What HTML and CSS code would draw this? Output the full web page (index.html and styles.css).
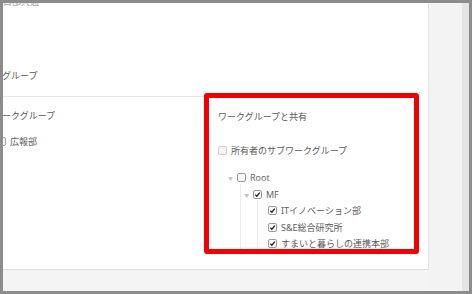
FILE: index.html
```html
<!DOCTYPE html>
<html>
  <head>
    <meta charset="utf-8" />
    <title>ワークグループと共有</title>
    <link rel="stylesheet" href="styles.css">
  </head>
  <body>
    <div class="window">
      <div class="main">
        <div class="left-col">
          <p class="label top-label">目部共通</p>
          <p class="label cut-group">所有者グループ</p>
          <hr class="divider" />
          <p class="label cut-work">ワークグループ</p>
          <p class="label dept">
            <span class="cb"></span>
            <span>広報部</span>
          </p>
        </div>

        <div class="share-box">
          <h3 class="share-title">ワークグループと共有</h3>
          <p class="row sub-row">
            <span class="cb disabled"></span>
            <span>所有者のサブワークグループ</span>
          </p>

          <ul class="tree">
            <li class="row level-0">
              <span class="arrow">&#9660;</span>
              <span class="cb"></span>
              <span class="latin">Root</span>
            </li>
            <li class="row level-1">
              <span class="arrow">&#9660;</span>
              <span class="cb on"><svg viewBox="0 0 8 8"><path d="M1.5 4.2 L3.3 6 L6.6 1.8" /></svg></span>
              <span class="latin">MF</span>
            </li>
            <li class="row level-2">
              <span class="cb on"><svg viewBox="0 0 8 8"><path d="M1.5 4.2 L3.3 6 L6.6 1.8" /></svg></span>
              <span>ITイノベーション部</span>
            </li>
            <li class="row level-2">
              <span class="cb on"><svg viewBox="0 0 8 8"><path d="M1.5 4.2 L3.3 6 L6.6 1.8" /></svg></span>
              <span>S&amp;E総合研究所</span>
            </li>
            <li class="row level-2">
              <span class="cb on"><svg viewBox="0 0 8 8"><path d="M1.5 4.2 L3.3 6 L6.6 1.8" /></svg></span>
              <span>すまいと暮らしの連携本部</span>
            </li>
            <li class="row level-2">
              <span class="cb on"><svg viewBox="0 0 8 8"><path d="M1.5 4.2 L3.3 6 L6.6 1.8" /></svg></span>
              <span>住宅事業本部</span>
            </li>
          </ul>
        </div>
      </div>
      <div class="side-strip"></div>
      <div class="side-edge"></div>
      <div class="footer"></div>
    </div>
  </body>
</html>
```

FILE: styles.css
```css
* {
  margin: 0;
  padding: 0;
  box-sizing: border-box;
}

body {
  font-family: "Noto Sans", "Noto Sans CJK JP", sans-serif;
  font-size: 9px;
  color: #5a5a5a;
  background-color: #fff;
}

.window {
  width: 472px;
  height: 294px;
  border: 3px solid #8c8c8c;
  display: grid;
  grid-template-columns: 426px 33px 1fr;
  grid-template-rows: 267px 1fr;
  background-color: #f4f4f4;
}

.main {
  grid-column: 1;
  grid-row: 1;
  background-color: #fff;
  display: grid;
  grid-template-columns: 201px 215px;
  align-items: start;
  overflow: hidden;
  border-right: 1px solid #e4e4e4;
  border-bottom: 1px solid #dedede;
}

.side-strip {
  grid-column: 2;
  grid-row: 1 / 3;
  background-color: #f3f3f3;
}

.side-edge {
  grid-column: 3;
  grid-row: 1 / 3;
  background-color: #e4e4e4;
}

.footer {
  grid-column: 1;
  grid-row: 2;
  background-color: #f4f4f4;
}

.label {
  line-height: 11px;
  white-space: nowrap;
}

.top-label {
  margin-top: -7px;
  color: #9a9a9a;
}

.cut-group {
  margin-top: 63px;
  margin-left: -28px;
}

.divider {
  border: none;
  border-top: 1px solid #e6e6e6;
  margin-top: 15px;
}

.cut-work {
  margin-top: 13px;
  margin-left: -10px;
}

.dept {
  margin-top: 15px;
  margin-left: -6px;
  display: flex;
  align-items: center;
  gap: 4px;
}

.share-box {
  margin-top: 90px;
  height: 161px;
  border: 5px solid #f00000;
  border-radius: 3px;
  overflow: hidden;
  padding: 13px 0 0 9px;
}

.share-title {
  font-size: 9px;
  font-weight: normal;
  line-height: 11px;
}

.row {
  display: flex;
  align-items: center;
  gap: 4px;
  height: 11px;
  white-space: nowrap;
}

.sub-row {
  margin-top: 23px;
}

.tree {
  list-style: none;
  margin-top: 16px;
  position: relative;
}

.tree .row {
  margin-bottom: 5.6px;
}

.level-0 {
  padding-left: 10px;
}

.level-1 {
  padding-left: 26px;
}

.level-2 {
  padding-left: 50px;
}

.tree::before,
.tree::after {
  content: "";
  position: absolute;
  border-left: 1px solid #ececec;
  bottom: -20px;
}

.tree::before {
  left: 22px;
  top: 12px;
}

.tree::after {
  left: 39px;
  top: 28px;
}

.arrow {
  font-size: 5px;
  color: #c4c4c4;
  width: 5px;
}

.cb {
  display: inline-block;
  width: 9px;
  height: 9px;
  border: 1px solid #9a9a9a;
  border-radius: 2px;
  background-color: #fafafa;
  flex-shrink: 0;
}

.cb.disabled {
  border-color: #cfcfcf;
  background-color: #f4f4f4;
}

.cb svg {
  display: block;
  width: 7px;
  height: 7px;
}

.cb svg path {
  fill: none;
  stroke: #222;
  stroke-width: 1.5;
}

.latin {
  font-family: "Open Sans", "Noto Sans", sans-serif;
}
```
